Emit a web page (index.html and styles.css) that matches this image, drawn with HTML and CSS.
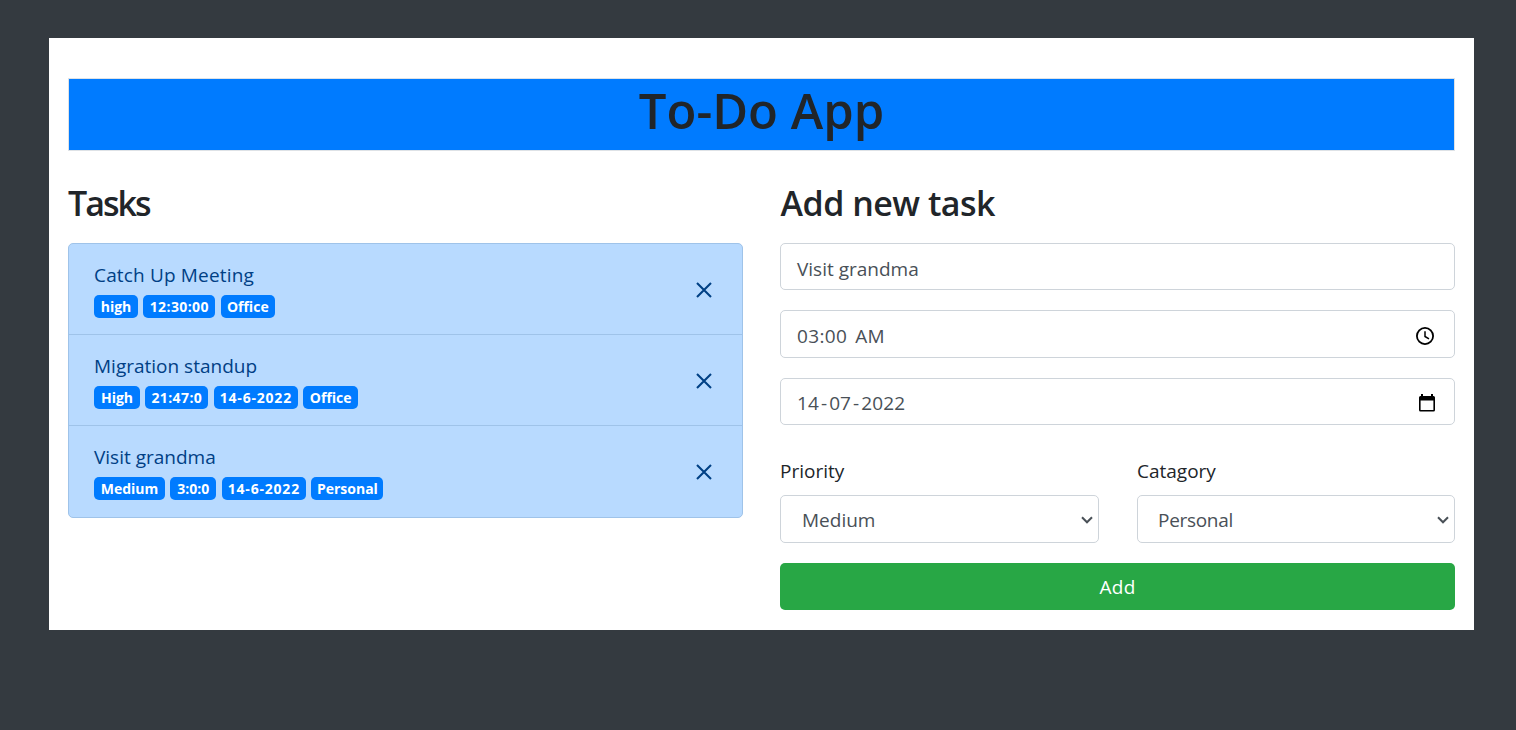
FILE: index.html
```html
<!DOCTYPE html>
<html lang="en">
<head>
<meta charset="utf-8">
<title>To-Do App</title>
<link rel="stylesheet" href="styles.css">
</head>
<body>
<main class="panel">
  <h1 class="title"><span>To-Do App</span></h1>
  <div class="columns">
    <section>
      <h2 class="heading heading-tasks">Tasks</h2>
      <ul class="tasks">
        <li class="task">
          <div>
            <div class="name name-catch">Catch Up Meeting</div>
            <div class="badges"><span class="badge w44">high</span><span class="badge w72 digits">12:30:00</span><span class="badge w54">Office</span></div>
          </div>
          <svg class="close" viewBox="0 0 18 18"><path d="M2 2L16 16M16 2L2 16"/></svg>
        </li>
        <li class="task">
          <div>
            <div class="name">Migration standup</div>
            <div class="badges"><span class="badge w46">High</span><span class="badge w63 digits">21:47:0</span><span class="badge w85 dashed">14-6-2022</span><span class="badge w54">Office</span></div>
          </div>
          <svg class="close" viewBox="0 0 18 18"><path d="M2 2L16 16M16 2L2 16"/></svg>
        </li>
        <li class="task">
          <div>
            <div class="name">Visit grandma</div>
            <div class="badges"><span class="badge w71">Medium</span><span class="badge w46">3:0:0</span><span class="badge w85 dashed">14-6-2022</span><span class="badge w72">Personal</span></div>
          </div>
          <svg class="close" viewBox="0 0 18 18"><path d="M2 2L16 16M16 2L2 16"/></svg>
        </li>
      </ul>
    </section>
    <section>
      <h2 class="heading heading-add">Add new task</h2>
      <div class="form">
        <div class="field field-name"><span>Visit grandma</span></div>
        <div class="field field-time"><span class="time">03:00<span class="meridiem">AM</span></span>
          <svg class="clock" viewBox="0 0 20 20"><circle cx="10" cy="10" r="8.1"/><path d="M10 5.3V10.5L14 12.8"/></svg>
        </div>
        <div class="field field-date"><span class="date">14<i>-</i>07<i>-</i>2022</span>
          <svg class="calendar" viewBox="0 0 18 20"><path fill-rule="evenodd" d="M3 1H5V3H13V1H15V3H15.5Q17 3 17 4.500V17Q17 18.500 15.500 18.500H2.500Q1 18.500 1 17V4.500Q1 3 2.500 3H3ZM2.600 7.500V17H15.400V7.500Z"/></svg>
        </div>
        <div class="selects">
          <div>
            <div class="label">Priority</div>
            <div class="field select"><span>Medium</span><svg class="chevron" viewBox="0 0 12 8"><path d="M1 1.300L6 6.300L11 1.300"/></svg></div>
          </div>
          <div>
            <div class="label">Catagory</div>
            <div class="field select select-category"><span class="opt-personal">Personal</span><svg class="chevron" viewBox="0 0 12 8"><path d="M1 1.300L6 6.300L11 1.300"/></svg></div>
          </div>
        </div>
        <button class="add" type="button">Add</button>
      </div>
    </section>
  </div>
</main>
</body>
</html>
```
FILE: styles.css
```css
* { box-sizing: border-box; }
body {
  margin: 0;
  padding: 38px 42px 0 49px;
  min-height: 730px;
  background: #343a40;
  color: #212529;
  font: 400 19px/28px "Open Sans", "Noto Sans", sans-serif;
}
.panel { height: 592px; padding: 40px 19px 0; background: #fff; }
.title {
  display: flex;
  justify-content: center;
  height: 73px;
  margin: 0;
  border: 1px solid #dee2e6;
  background: #007bff;
  font-size: 49px;
  font-weight: 600;
  line-height: 62px;
}
.columns { display: grid; grid-template-columns: 675px 675px; justify-content: space-between; padding-top: 31px; }
.heading { height: 61px; margin: 0; font-size: 34px; font-weight: 600; line-height: 43px; }
.heading-tasks { letter-spacing: -2px; }
.heading-add { padding-left: 0.5px; letter-spacing: -0.5px; }
.tasks {
  margin: 0;
  padding: 0;
  height: 275px;
  list-style: none;
  border: 1px solid #9fc3e9;
  border-radius: 5px;
  overflow: hidden;
  background: #b8daff;
}
.task { display: flex; justify-content: space-between; height: 91px; padding: 17px 29px 0 25px; border-bottom: 1px solid #9fc3e9; color: #004085; }
.task:last-child { border-bottom: 0; }
.name { height: 34px; white-space: nowrap; }
.name-catch { letter-spacing: 0.16px; }
.badges { display: flex; gap: 5.3px; }
.badge {
  height: 23px;
  border-radius: 5px;
  background: #007bff;
  color: #fff;
  font-size: 14px;
  font-weight: 700;
  line-height: 23px;
  text-align: center;
  white-space: nowrap;
}
.digits { letter-spacing: 0.4px; }
.dashed { letter-spacing: 0.8px; }
.w44 { width: 44px; }
.w46 { width: 46px; }
.w54 { width: 54.5px; }
.w63 { width: 63px; }
.w71 { width: 71px; }
.w72 { width: 72px; }
.w85 { width: 84.5px; }
.close { width: 18px; height: 18px; margin-top: 20px; fill: none; stroke: #004085; stroke-width: 2.1; }
.field {
  display: flex;
  align-items: center;
  justify-content: space-between;
  height: 47px;
  padding: 3px 17px 0 16px;
  border: 1px solid #ced4da;
  border-radius: 5px;
  color: #495057;
  white-space: nowrap;
}
.field-name { padding-top: 5px; }
.field-time { height: 48px; margin-top: 20px; padding-right: 19.5px; letter-spacing: 0.35px; }
.field-date { margin-top: 20px; padding-right: 18px; letter-spacing: 0.1px; }
.meridiem { margin-left: 8px; }
.date i { margin: 0 2px; font-style: normal; }
.clock { width: 20px; height: 20px; fill: none; stroke: #000; stroke-width: 1.8; }
.clock path { stroke-width: 1.5; }
.calendar { width: 18px; height: 20px; }
.selects { display: grid; grid-template-columns: 319px 318px; justify-content: space-between; padding-top: 32px; }
.label { height: 38px; white-space: nowrap; }
.select { height: 48px; padding: 2px 5px 0 21px; }
.select-category { padding-left: 20px; }
.opt-personal { letter-spacing: -0.3px; }
.chevron { width: 12px; height: 8px; fill: none; stroke: #495057; stroke-width: 2; }
.add {
  display: block;
  width: 100%;
  height: 47px;
  margin-top: 20px;
  padding: 0;
  border: 0;
  border-radius: 5px;
  background: #28a745;
  color: #fff;
  font: inherit;
  letter-spacing: 0.3px;
}
```
